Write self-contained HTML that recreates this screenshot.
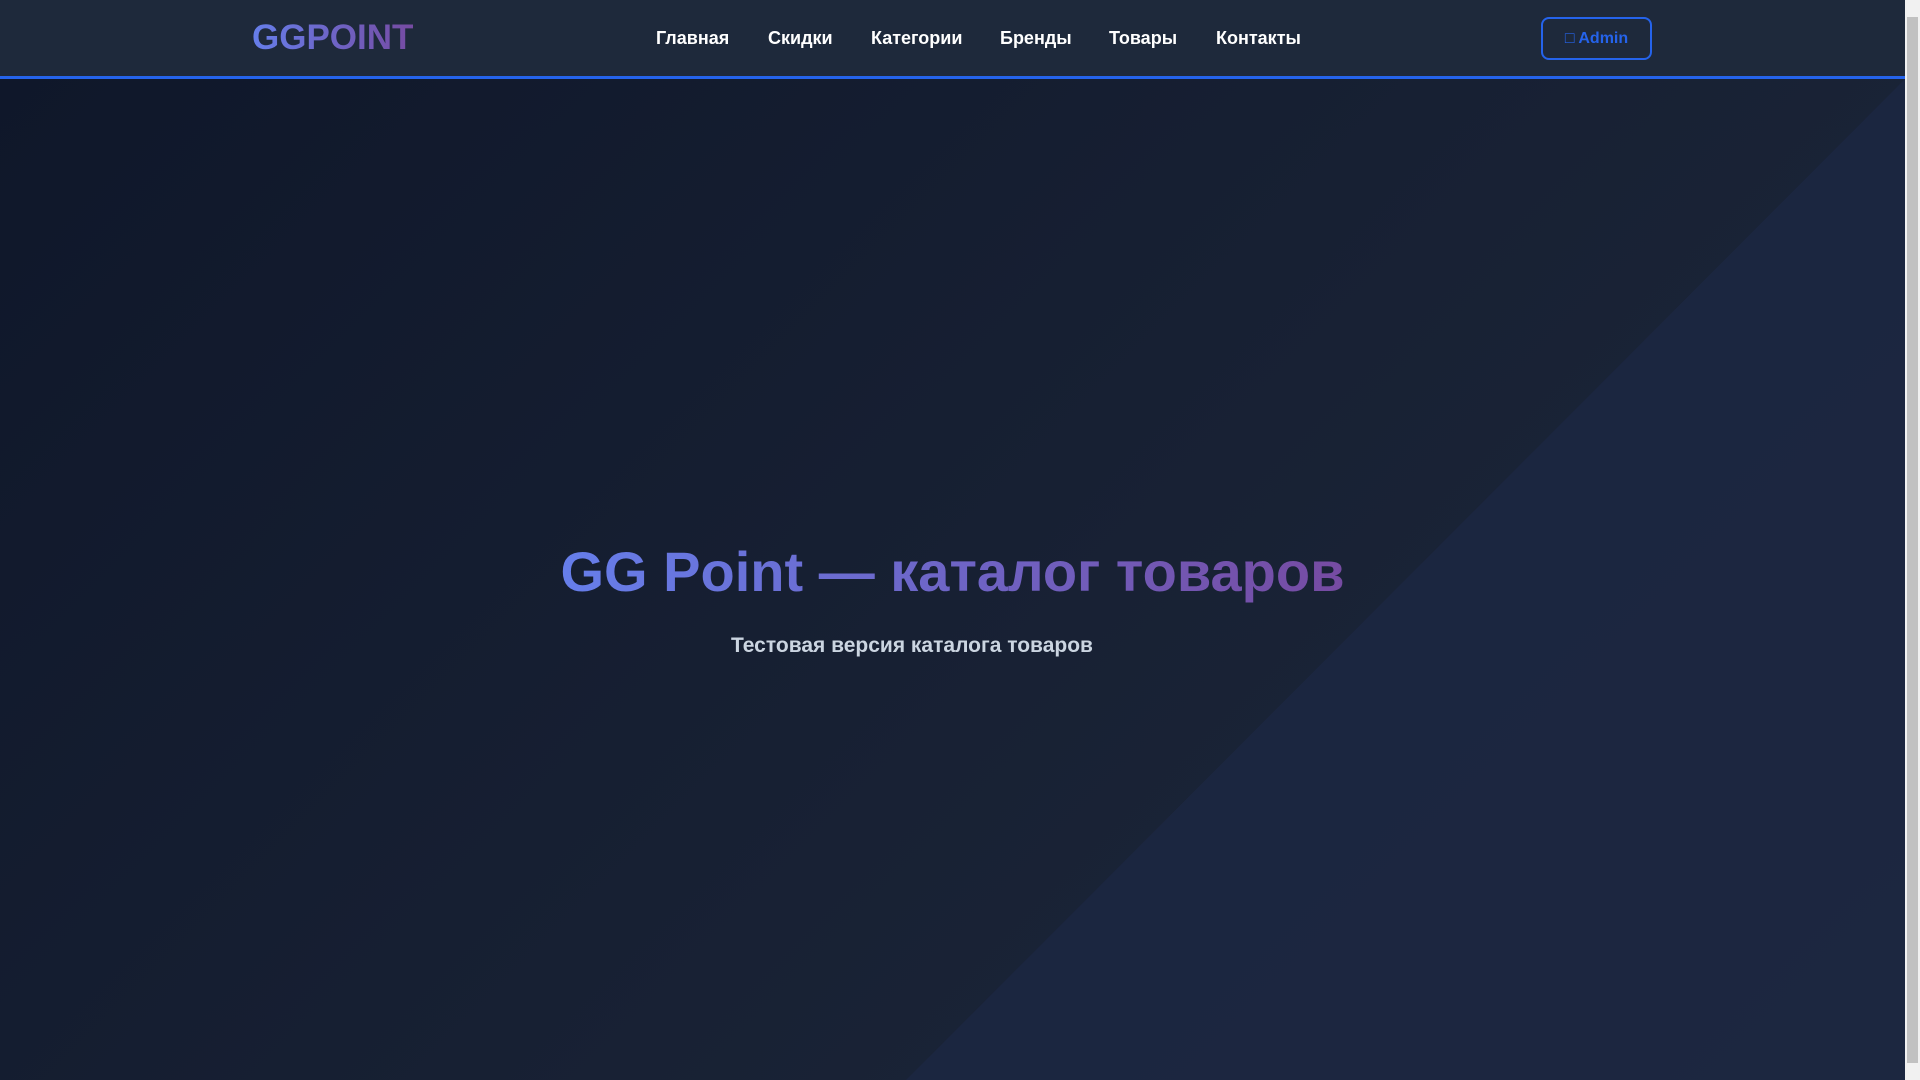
<!DOCTYPE html>
<html><head><meta charset="utf-8"><style>
*{margin:0;padding:0;box-sizing:border-box}
body{width:1920px;height:1080px;overflow:hidden;position:relative;font-family:"Liberation Sans",sans-serif;background:#0f172a}
.hero{position:absolute;left:0;top:79px;width:1905px;height:1001px;background:linear-gradient(135deg,#0f172a 0%,#172033 50%,#1e293b 100%)}
.tri{position:absolute;left:0;top:79px;width:1905px;height:1001px;background:#1c2742;clip-path:polygon(1905px 0,1905px 1001px,906px 1001px);opacity:.85}
header{position:absolute;left:0;top:0;width:1905px;height:76px;background:#1e293b;border-bottom:3px solid #2563eb;box-sizing:content-box}
.logo{position:absolute;left:252px;top:17px;font-size:35px;font-weight:bold;background:linear-gradient(90deg,#667eea,#764ba2);-webkit-background-clip:text;color:transparent;line-height:42px}
.nav a{position:absolute;top:26px;color:#fff;font-size:18px;font-weight:bold;line-height:24px;text-decoration:none}
.btn{position:absolute;left:1541px;top:17px;width:111px;height:43px;border:2px solid #2563eb;border-radius:8px;color:#2563eb;font-size:16px;font-weight:bold;text-align:center;line-height:39px}
h1{position:absolute;left:0;width:1905px;top:539px;text-align:center;font-size:56px;line-height:66px;font-weight:bold}
h1 span{background:linear-gradient(90deg,#667eea,#764ba2);-webkit-background-clip:text;color:transparent}
.sub{position:absolute;left:731px;top:633px;font-size:21px;font-weight:bold;color:#cbd5e1;line-height:26px}
.sb{position:absolute;left:1905px;top:0;width:15px;height:1080px;background:#f1f1f1}
.sb div{position:absolute;left:2px;top:17px;width:11px;height:1046px;background:#c1c1c1}
</style></head><body>
<div class="hero"></div><div class="tri"></div>
<header>
<div class="logo">GGPOINT</div>
<div class="nav">
<a style="left:656px">Главная</a><a style="left:768px">Скидки</a><a style="left:871px">Категории</a><a style="left:1000px">Бренды</a><a style="left:1109px">Товары</a><a style="left:1216px">Контакты</a>
</div>
<div class="btn">&#9633; Admin</div>
</header>
<h1><span>GG Point — каталог товаров</span></h1>
<div class="sub">Тестовая версия каталога товаров</div>
<div class="sb"><div></div></div>
</body></html>
